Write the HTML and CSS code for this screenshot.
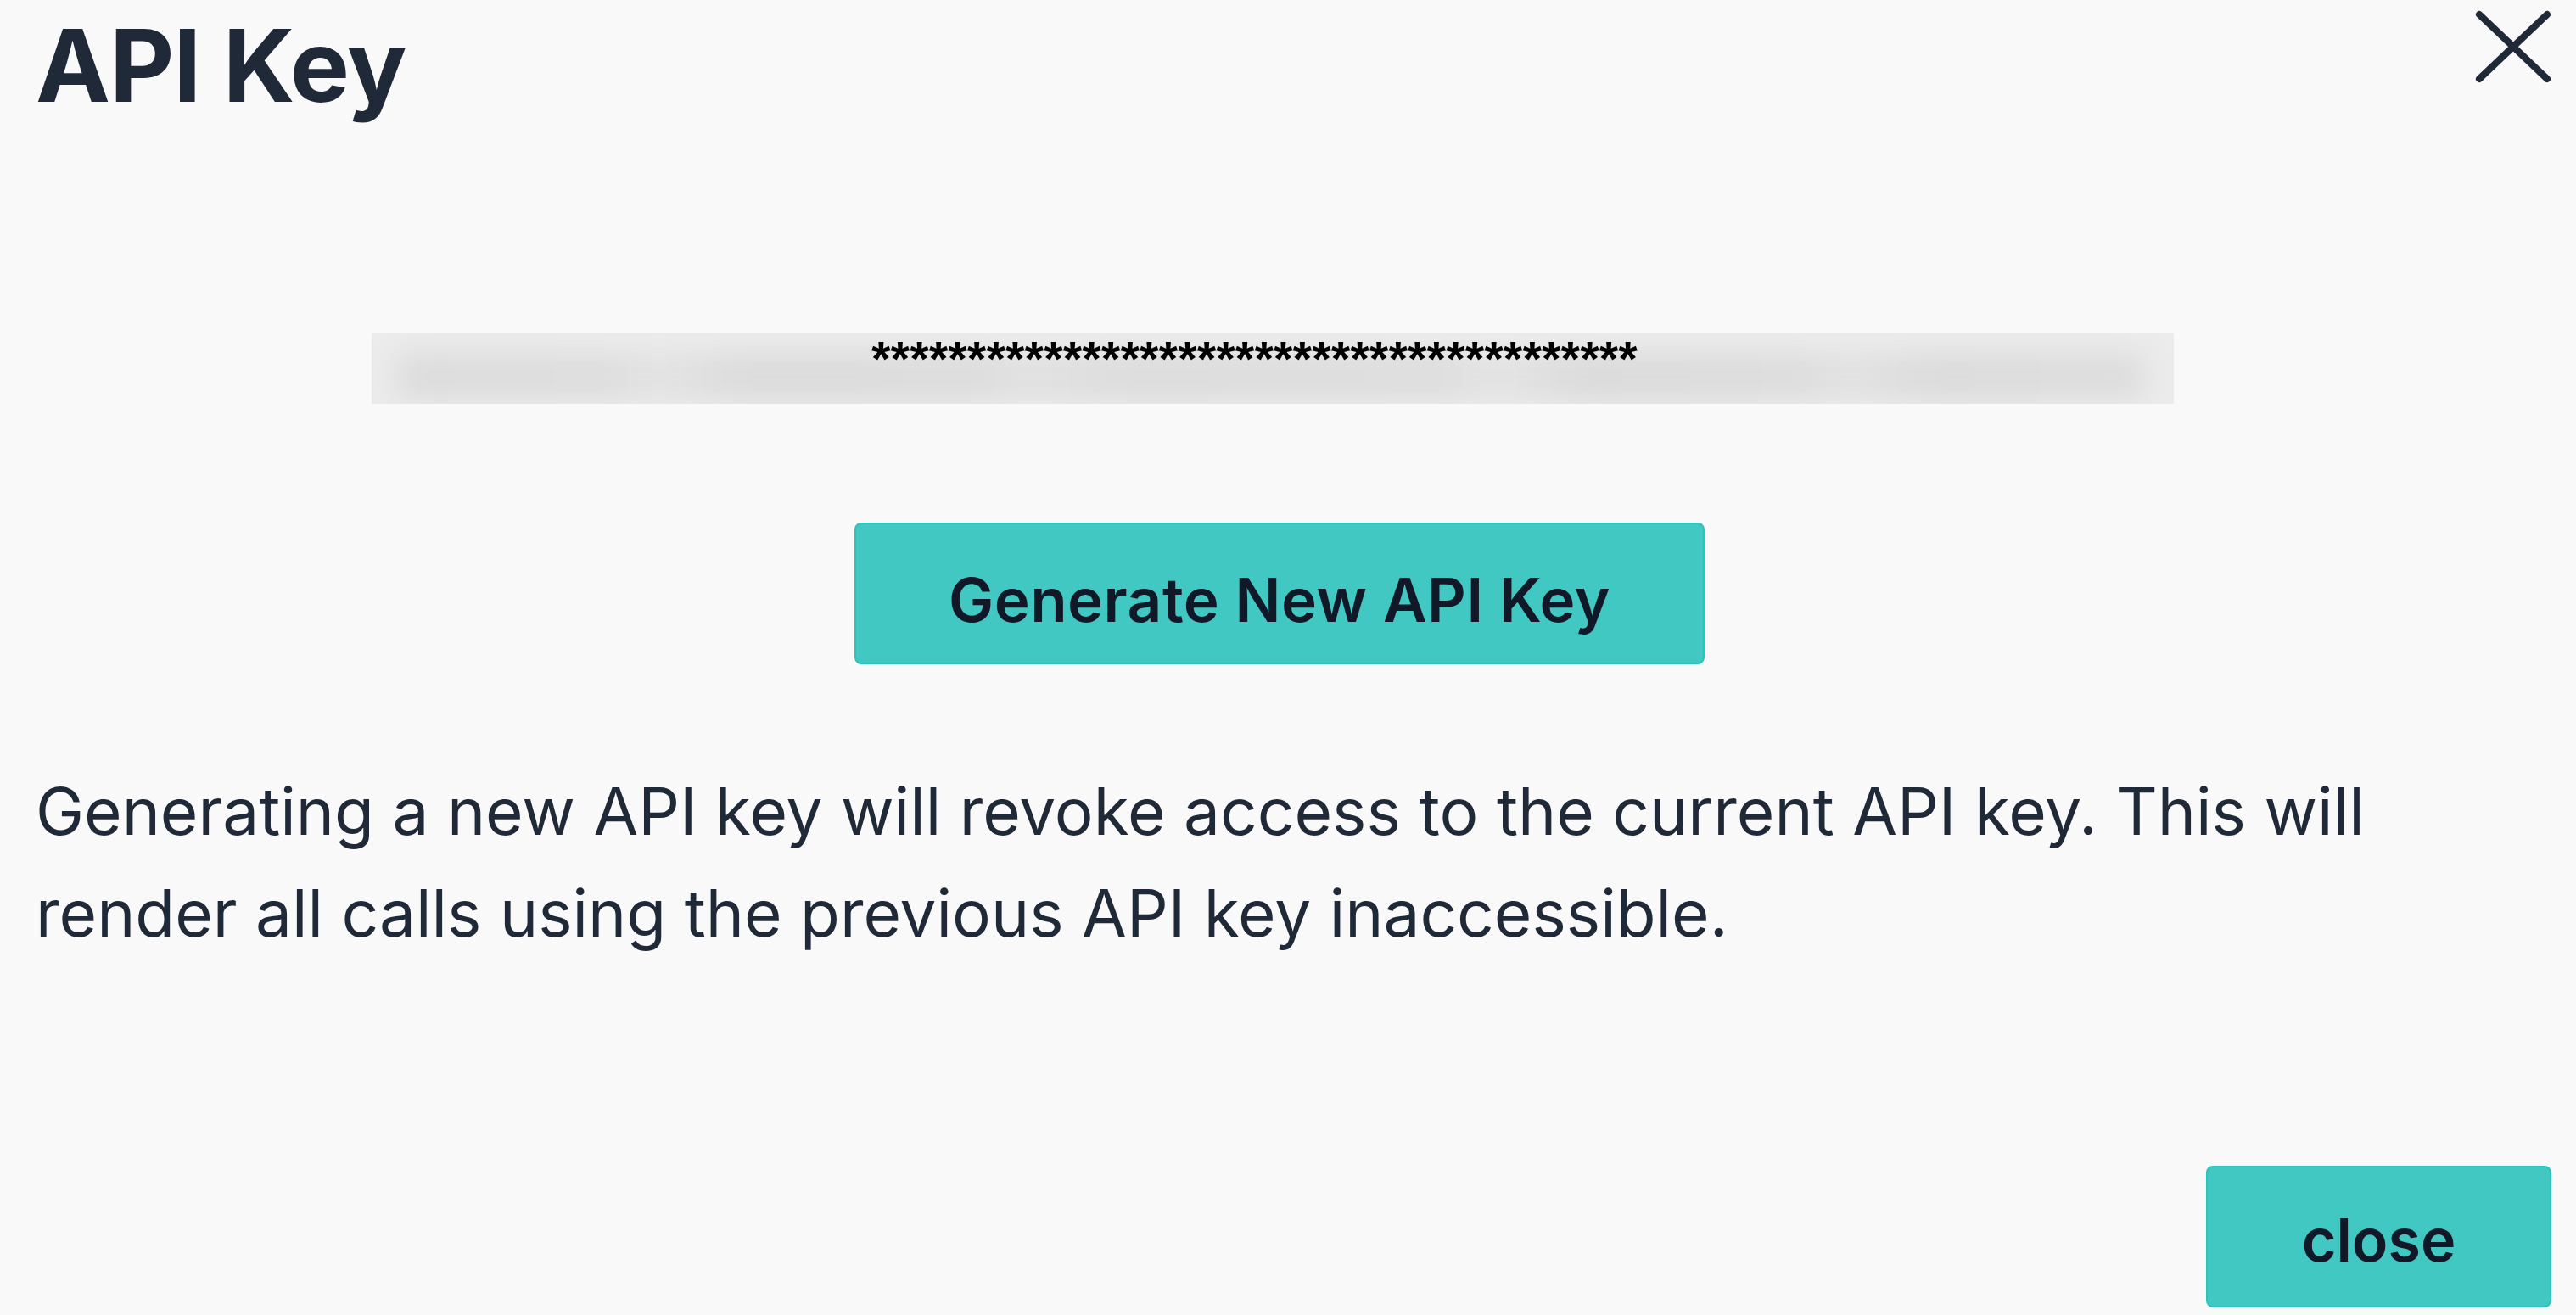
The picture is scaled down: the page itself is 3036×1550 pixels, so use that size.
FILE: index.html
```html
<!DOCTYPE html>
<html lang="en">

<head>
    <meta charset="UTF-8">
    <meta name="viewport" content="width=device-width, initial-scale=1.0">
    <title>API Key</title>
    <link rel="stylesheet" href="styles.css">
</head>

<body>
    <div class="modal">
        <div class="modal-header">
            <h1 class="modal-title">API Key</h1>
            <button class="icon-close" aria-label="Close">
                <svg width="90" height="86" viewBox="0 0 90 86">
                    <path d="M5 5 L85 81 M85 5 L5 81" stroke="#1f2937" stroke-width="8" stroke-linecap="round" fill="none"/>
                </svg>
            </button>
        </div>

        <div class="modal-body">
            <div class="key-field">
                <div class="key-blur"></div>
                <span class="key-mask">****************************************</span>
            </div>

            <button class="btn btn-generate">Generate New API Key</button>

            <p class="warning">Generating a new API key will revoke access to the current API key. This will render all calls using the previous API key inaccessible.</p>
        </div>

        <div class="modal-footer">
            <button class="btn btn-close">close</button>
        </div>
    </div>
</body>

</html>
```

FILE: styles.css
```css
* {
    margin: 0;
    padding: 0;
    box-sizing: border-box;
}

body {
    background-color: #f9f9f9;
    font-family: Inter, "Liberation Sans", sans-serif;
    color: #1f2937;
}

.modal {
    display: flex;
    flex-direction: column;
    height: 1550px;
    padding: 0 29px 9px 42px;
}

.modal-header {
    display: flex;
    justify-content: space-between;
    align-items: flex-start;
}

.modal-title {
    font-size: 118px;
    font-weight: 700;
    line-height: 144px;
    margin-top: 5px;
    letter-spacing: -1.2px;
}

.icon-close {
    background: none;
    border: none;
    margin-top: 12px;
    cursor: pointer;
}

.icon-close svg {
    display: block;
}

.modal-body {
    display: flex;
    flex-direction: column;
    align-items: center;
    padding-right: 33px;
}

/* masked key sits on top of the blurred real key */
.key-field {
    position: relative;
    width: 2124px;
    height: 84px;
    margin-top: 243px;
    margin-right: 16px;
    padding-left: 589px;
    background-color: #ececec;
}

.key-blur {
    position: absolute;
    top: 26px;
    left: 30px;
    right: 34px;
    bottom: 6px;
    background: linear-gradient(90deg, #dadada 0%, #dcdcdc 12%, #e2e2e2 15%, #d9d9d9 20%, #dadada 33%, #e0e0e0 36%, #dadada 42%, #dcdcdc 60%, #e3e3e3 63%, #d8d8d8 68%, #dbdbdb 80%, #e1e1e1 83%, #d9d9d9 88%, #dcdcdc 100%);
    filter: blur(18px);
    clip-path: inset(-26px -34px -6px -30px);
}

.key-mask {
    position: relative;
    font-family: "Liberation Sans", Arial, sans-serif;
    font-weight: 700;
    font-size: 58px;
    line-height: 62px;
    color: #000;
}

.btn {
    font-family: Inter, "Liberation Sans", sans-serif;
    font-weight: 600;
    color: #111827;
    background-color: #42c8c2;
    border: 2px solid #2cc3bc;
    border-radius: 8px;
    cursor: pointer;
}

.btn-generate {
    width: 1002px;
    height: 167px;
    margin-top: 140px;
    padding-top: 14px;
    font-size: 71px;
    letter-spacing: 0.5px;
}

.warning {
    align-self: stretch;
    margin-top: 113px;
    font-size: 76.5px;
    line-height: 120px;
}

.modal-footer {
    display: flex;
    justify-content: flex-end;
    margin-top: auto;
}

.btn-close {
    width: 407px;
    height: 167px;
    padding-top: 8px;
    font-size: 70px;
}
```
